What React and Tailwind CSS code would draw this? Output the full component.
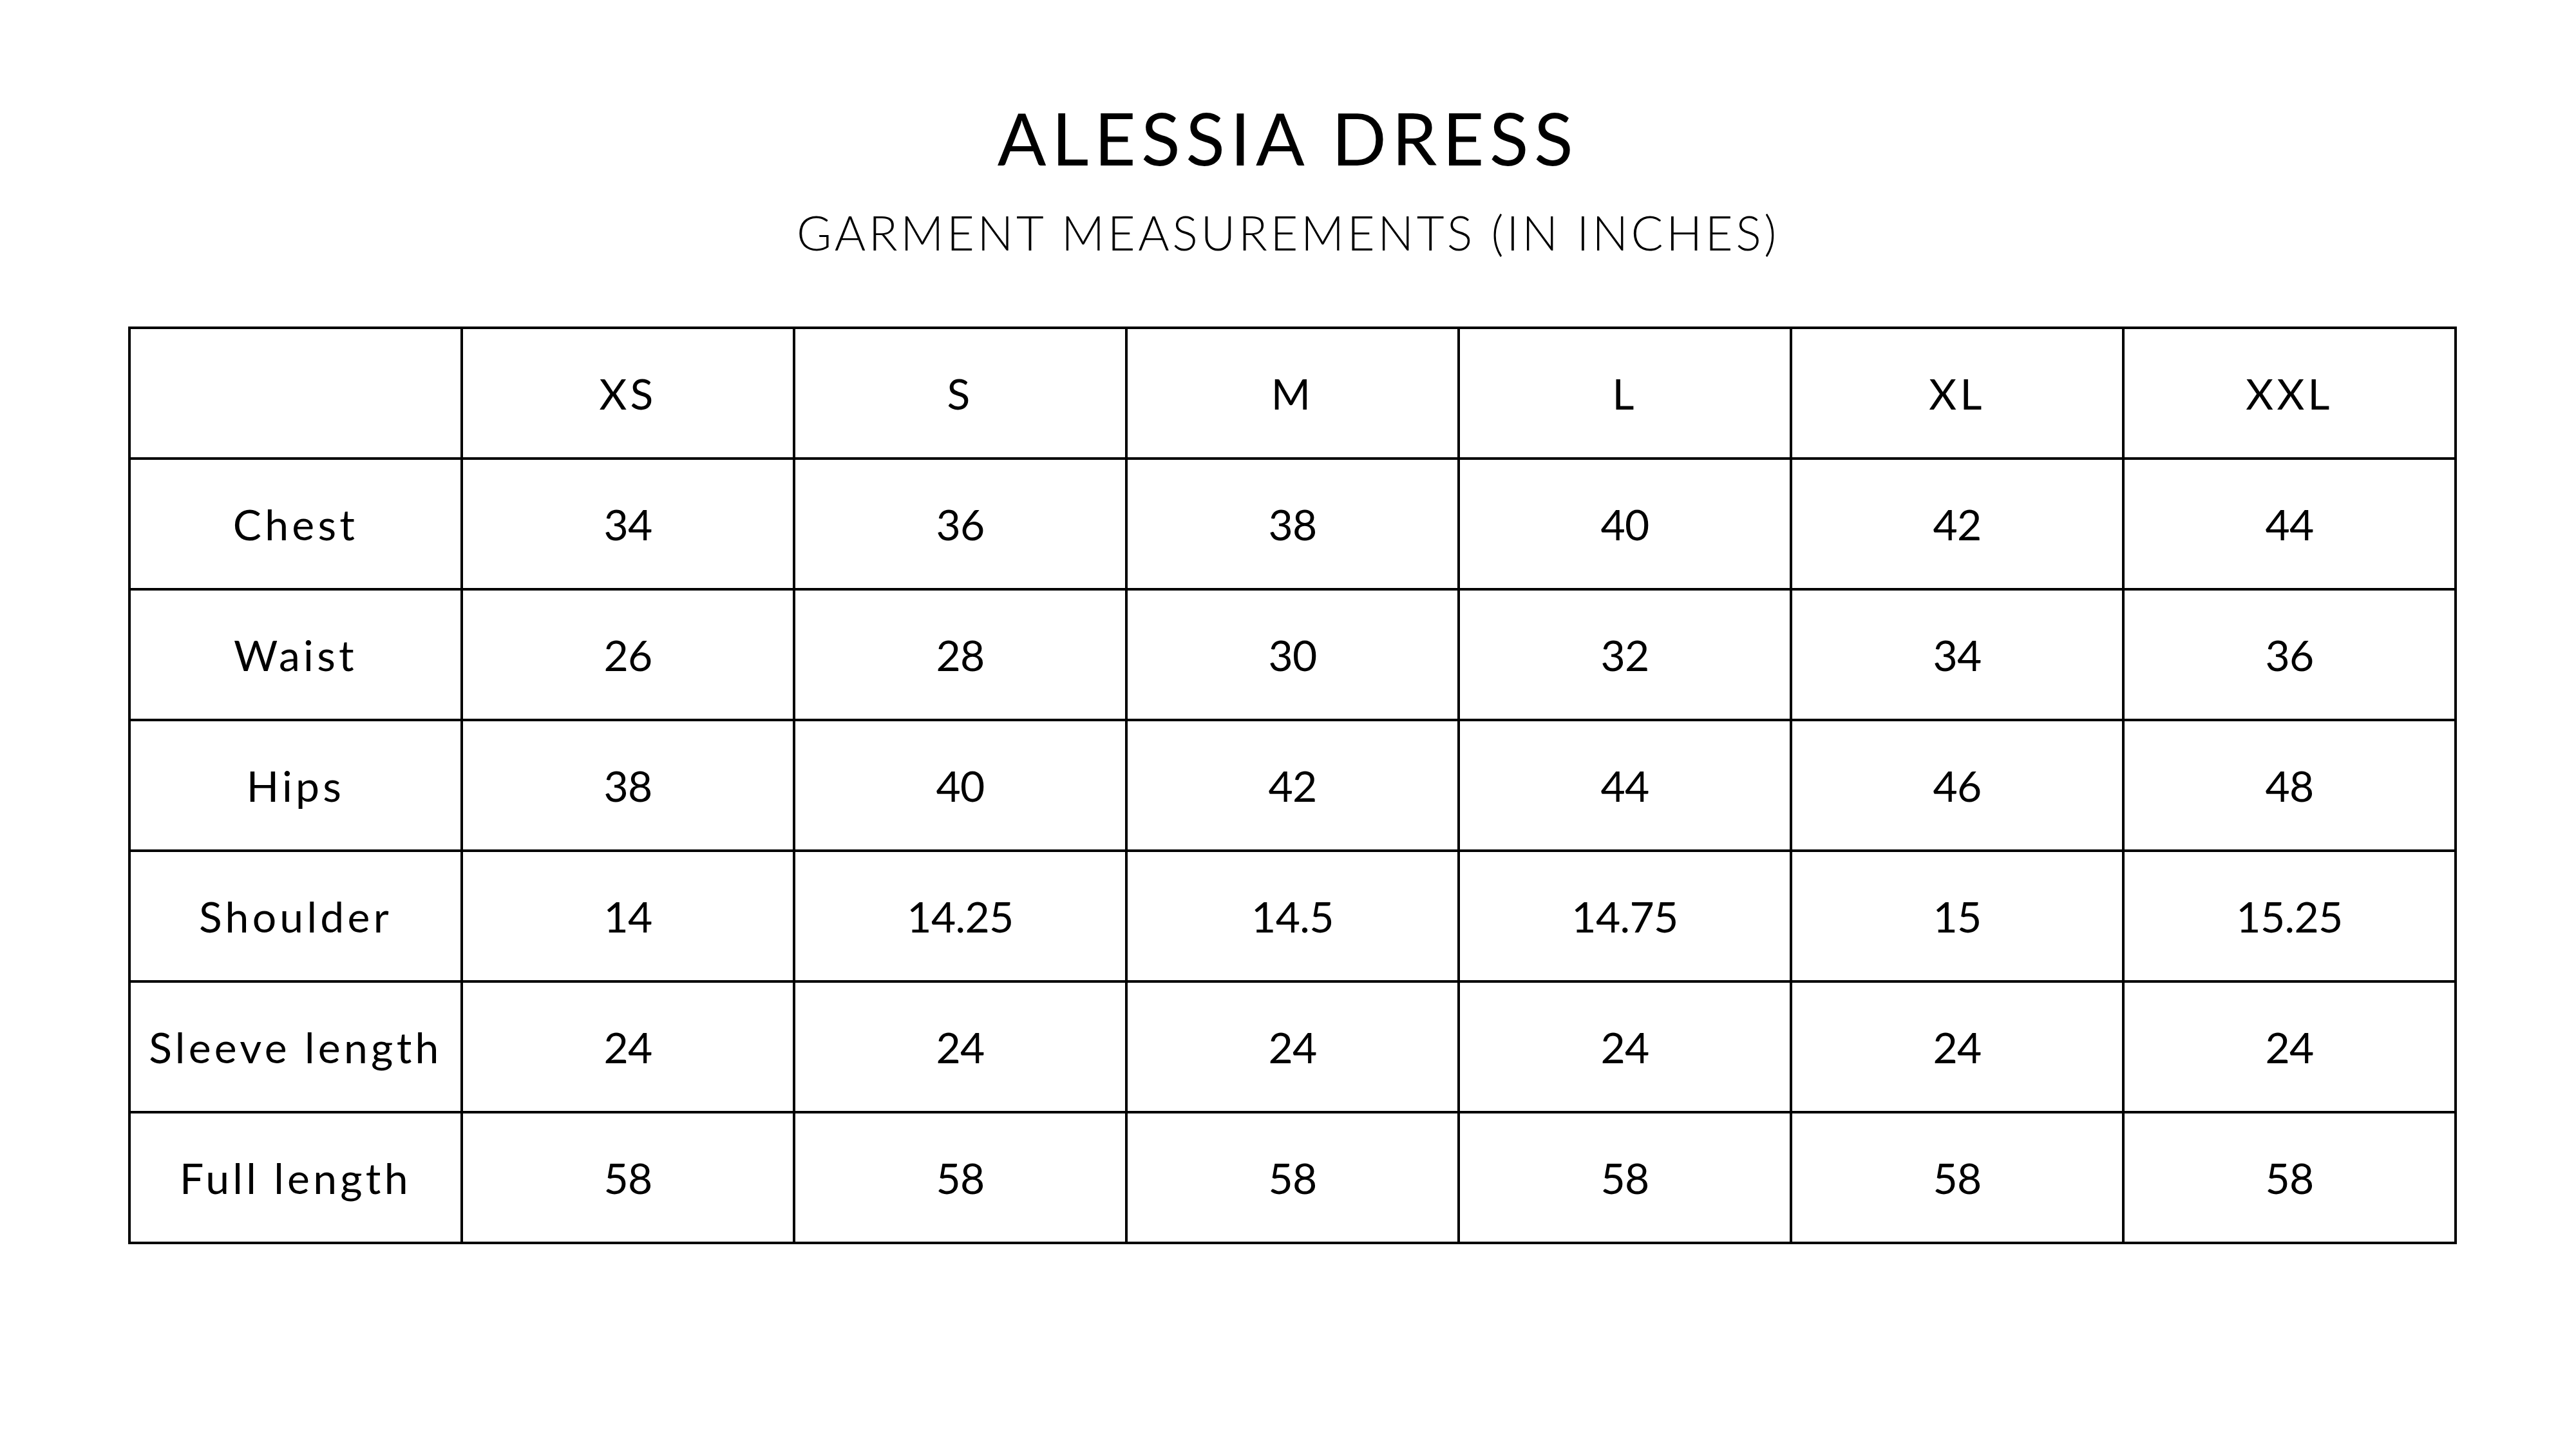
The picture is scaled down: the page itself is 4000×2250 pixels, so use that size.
import React from "react";

const sizes = ["XS", "S", "M", "L", "XL", "XXL"];

const rows = [
  { label: "Chest", values: ["34", "36", "38", "40", "42", "44"] },
  { label: "Waist", values: ["26", "28", "30", "32", "34", "36"] },
  { label: "Hips", values: ["38", "40", "42", "44", "46", "48"] },
  { label: "Shoulder", values: ["14", "14.25", "14.5", "14.75", "15", "15.25"] },
  { label: "Sleeve length", values: ["24", "24", "24", "24", "24", "24"] },
  { label: "Full length", values: ["58", "58", "58", "58", "58", "58"] },
];

const Cell = ({ children, wide }) => (
  <td
    className={
      "w-[516px] h-[203px] border-[4px] border-black text-center align-middle p-0 " +
      (wide ? "tracking-[0.08em]" : "tracking-[-0.01em]")
    }
  >
    {children}
  </td>
);

const App = () => {
  return (
    <div className="w-[4000px] h-[2250px] bg-white text-black font-['Lato','Open_Sans',sans-serif]">
      <div className="pt-[149px] flex flex-col items-center">
        <h1 className="text-[112px] leading-[130px] font-normal tracking-[0.075em]">
          ALESSIA DRESS
        </h1>
        <p className="mt-[37px] text-[74px] leading-[90px] font-light tracking-[0.062em]">
          GARMENT MEASUREMENTS (IN INCHES)
        </p>
      </div>

      <table className="mt-[101px] ml-[199px] border-collapse table-fixed text-[66px]">
        <tbody>
          <tr>
            <Cell />
            {sizes.map((size) => (
              <Cell key={size} wide>
                {size}
              </Cell>
            ))}
          </tr>
          {rows.map((row) => (
            <tr key={row.label}>
              <Cell wide>{row.label}</Cell>
              {row.values.map((v, i) => (
                <Cell key={i}>{v}</Cell>
              ))}
            </tr>
          ))}
        </tbody>
      </table>
    </div>
  );
};

export default App;
